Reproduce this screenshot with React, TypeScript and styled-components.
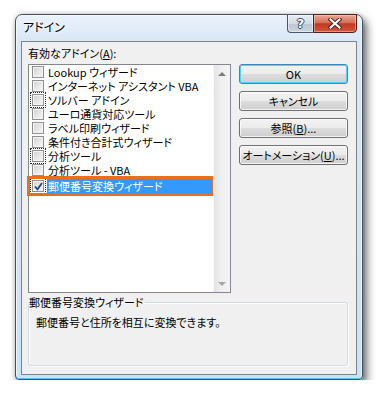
import React from "react";
import styled, { createGlobalStyle } from "styled-components";

const Global = createGlobalStyle`
  html, body { margin: 0; padding: 0; background: #ffffff; }
  body { font-family: "Noto Sans CJK JP", "Noto Sans", sans-serif; color: #000; font-feature-settings: "palt"; }
  * { box-sizing: border-box; }
`;

const Page = styled.div`
  padding: 14px 0 0 15px;
`;

const Window = styled.div`
  width: 348px;
  height: 366px;
  border: 1px solid #45505c;
  border-radius: 7px 7px 4px 4px;
  padding: 0 5px 4px;
  display: flex;
  flex-direction: column;
  background: linear-gradient(180deg, #eaf2fb 0px, #d9e7f6 26px, #d3e2f2 80%, #c4e5f6 100%);
  box-shadow: inset 0 -1px 0 #5ac4ef, inset 0 0 0 1px rgba(255, 255, 255, 0.6),
    4px 5px 9px rgba(0, 0, 0, 0.55), 0 0 5px rgba(0, 0, 0, 0.2);
`;

const TitleBar = styled.div`
  height: 26px;
  display: flex;
  justify-content: space-between;
  align-items: flex-start;
`;

const Title = styled.span`
  padding: 5px 0 0 2px;
  font-size: 12px;
  line-height: 14px;
  text-shadow: 0 0 6px #fff, 0 0 3px #fff;
`;

const CaptionGroup = styled.div`
  display: flex;
  margin-top: -1px;
`;

const HelpButton = styled.div`
  width: 26px;
  height: 19px;
  border: 1px solid #4a5663;
  border-right: none;
  border-radius: 0 0 0 4px;
  background: linear-gradient(180deg, #e6ecf3 0%, #d3dce6 50%, #bcc7d3 51%, #c9d3de 100%);
  box-shadow: inset 0 0 0 1px rgba(255, 255, 255, 0.5);
  display: flex;
  align-items: center;
  justify-content: center;
  font: bold 13px/1 "DejaVu Sans", sans-serif;
  color: #f6f8fa;
  text-shadow: 1px 0 0 #3e4955, -1px 0 0 #3e4955, 0 1px 0 #3e4955, 0 -1px 0 #3e4955;
`;

const CloseButton = styled.div`
  width: 44px;
  height: 19px;
  border: 1px solid #4b2118;
  border-radius: 0 0 4px 0;
  background: linear-gradient(180deg, #eaa593 0%, #d8705a 45%, #c0381f 52%, #d4573a 100%);
  box-shadow: inset 0 0 0 1px rgba(255, 220, 210, 0.45);
  display: flex;
  align-items: center;
  justify-content: center;
`;

const Client = styled.div`
  flex: 1;
  border: 1px solid #7c838b;
  background: #f0f0f0;
  padding: 4px 8px 8px 6px;
  display: flex;
  flex-direction: column;
`;

const TopGrid = styled.div`
  display: grid;
  grid-template-columns: 203px 109px;
  column-gap: 8px;
  row-gap: 4px;
`;

const Caption = styled.div`
  grid-column: 1;
  grid-row: 1;
  font-size: 11px;
  line-height: 14px;
`;

const Key = styled.span`
  text-decoration: underline;
`;

const ListBox = styled.div`
  grid-column: 1;
  grid-row: 2;
  height: 229px;
  border: 1px solid #828790;
  background: #fff;
  display: flex;
`;

const Items = styled.div`
  flex: 1;
  min-width: 0;
  display: flex;
  flex-direction: column;
`;

const Row = styled.div<{ $selected?: boolean }>`
  height: ${(p) => (p.$selected ? 16 : 14)}px;
  margin-top: ${(p) => (p.$selected ? 1 : 0)}px;
  display: flex;
  align-items: center;
  font-size: 11px;
  line-height: 14px;
  white-space: nowrap;
  outline: ${(p) => (p.$selected ? "3px solid #e8701d" : "none")};
  outline-offset: -1px;
`;

const Check = styled.span<{ $focus?: boolean }>`
  flex: none;
  width: 12px;
  height: 12px;
  margin: 0 3px 0 3px;
  border: 1px solid #8f8f8f;
  background: linear-gradient(135deg, #cfcfcf 0%, #e6e6e6 50%, #f6f6f6 100%);
  box-shadow: inset 0 0 0 1px #f5f5f5;
  display: flex;
  align-items: center;
  justify-content: center;
  outline: ${(p) => (p.$focus ? "1px dotted #222" : "none")};
  outline-offset: 1px;
`;

const ItemLabel = styled.span<{ $selected?: boolean }>`
  flex: 1;
  align-self: stretch;
  display: flex;
  align-items: center;
  padding-left: 1px;
  background: ${(p) => (p.$selected ? "#3399ff" : "transparent")};
  color: ${(p) => (p.$selected ? "#fff" : "#000")};
`;

const ScrollBar = styled.div`
  width: 17px;
  flex: none;
  display: flex;
  flex-direction: column;
  justify-content: space-between;
  background: linear-gradient(90deg, #e4e4e4 0%, #efefef 40%, #f4f4f4 100%);
  border-left: 1px solid #f8f8f8;
`;

const Arrow = styled.div<{ $down?: boolean }>`
  height: 17px;
  display: flex;
  align-items: center;
  justify-content: center;
  &::before {
    content: "";
    width: 0;
    height: 0;
    border-left: 4px solid transparent;
    border-right: 4px solid transparent;
    ${(p) =>
      p.$down ? "border-top: 4px solid #a6a6a6;" : "border-bottom: 4px solid #7d7d7d;"}
  }
`;

const Buttons = styled.div`
  grid-column: 2;
  grid-row: 2;
  display: flex;
  flex-direction: column;
  gap: 7px;
`;

const Btn = styled.button<{ $default?: boolean }>`
  height: 20px;
  width: 109px;
  padding: 0;
  white-space: nowrap;
  font: 11px/14px "Noto Sans CJK JP", sans-serif;
  font-feature-settings: "palt";
  color: #000;
  border: 1px solid ${(p) => (p.$default ? "#3c86b8" : "#707070")};
  border-radius: 3px;
  background: linear-gradient(180deg, #f2f2f2 0%, #ebebeb 50%, #dddddd 51%, #cfcfcf 100%);
  box-shadow: inset 0 0 0 1px ${(p) => (p.$default ? "#4cd6fb" : "rgba(255,255,255,0.75)")};
`;

const Group = styled.fieldset`
  flex: 1;
  margin: 2px 0 0;
  padding: 0;
  min-width: 0;
  border: 1px solid #d2dbe2;
  border-radius: 3px;
  box-shadow: inset 1px 1px 0 #fff, 1px 1px 0 #fff;
`;

const Legend = styled.legend`
  padding: 0 1px 0 0;
  margin-left: 0;
  font-size: 11px;
  line-height: 14px;
`;

const Description = styled.div`
  padding: 6px 7px 0;
  font-size: 11px;
  line-height: 14px;
`;

const items: { label: string; checked?: boolean; focus?: boolean; selected?: boolean }[] = [
  { label: "Lookup ウィザード" },
  { label: "インターネット アシスタント VBA" },
  { label: "ソルバー アドイン", focus: true },
  { label: "ユーロ通貨対応ツール" },
  { label: "ラベル印刷ウィザード" },
  { label: "条件付き合計式ウィザード" },
  { label: "分析ツール", focus: true },
  { label: "分析ツール - VBA" },
  { label: "郵便番号変換ウィザード", checked: true, focus: true, selected: true },
];

export default function App() {
  return (
    <>
      <Global />
      <Page>
        <Window>
          <TitleBar>
            <Title>アドイン</Title>
            <CaptionGroup>
              <HelpButton>?</HelpButton>
              <CloseButton>
                <svg width="14" height="11" viewBox="0 0 14 11">
                  <path d="M2.5 1.5 L11.5 9.5 M11.5 1.5 L2.5 9.5" stroke="#4a2a24" strokeWidth="4" strokeLinecap="square" fill="none" />
                  <path d="M2.5 1.5 L11.5 9.5 M11.5 1.5 L2.5 9.5" stroke="#ffffff" strokeWidth="2" strokeLinecap="square" fill="none" />
                </svg>
              </CloseButton>
            </CaptionGroup>
          </TitleBar>
          <Client>
            <TopGrid>
              <Caption>
                有効なアドイン(<Key>A</Key>):
              </Caption>
              <ListBox>
                <Items>
                  {items.map((it) => (
                    <Row key={it.label} $selected={it.selected}>
                      <Check $focus={it.focus}>
                        {it.checked && (
                          <svg width="9" height="9" viewBox="0 0 9 9">
                            <path d="M1 4.5 L3.5 7.3 L8 1" stroke="#22429a" strokeWidth="1.8" fill="none" />
                          </svg>
                        )}
                      </Check>
                      <ItemLabel $selected={it.selected}>{it.label}</ItemLabel>
                    </Row>
                  ))}
                </Items>
                <ScrollBar>
                  <Arrow />
                  <Arrow $down />
                </ScrollBar>
              </ListBox>
              <Buttons>
                <Btn $default>OK</Btn>
                <Btn>キャンセル</Btn>
                <Btn>
                  参照(<Key>B</Key>)...
                </Btn>
                <Btn>
                  オートメーション(<Key>U</Key>)...
                </Btn>
              </Buttons>
            </TopGrid>
            <Group>
              <Legend>郵便番号変換ウィザード</Legend>
              <Description>郵便番号と住所を相互に変換できます。</Description>
            </Group>
          </Client>
        </Window>
      </Page>
    </>
  );
}
